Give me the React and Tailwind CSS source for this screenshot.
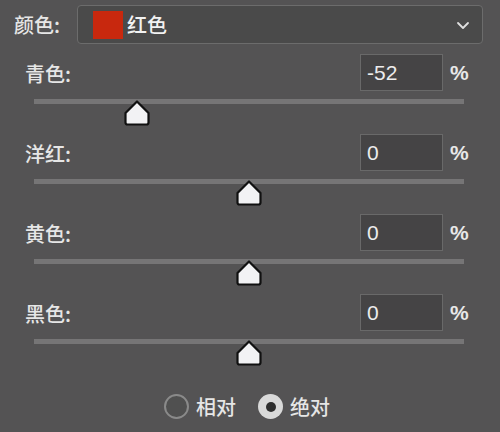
import { useState } from 'react';

const channels = [
  { name: '青色', value: -52 },
  { name: '洋红', value: 0 },
  { name: '黄色', value: 0 },
  { name: '黑色', value: 0 },
];

function Thumb() {
  return (
    <svg width="27" height="26" viewBox="0 0 27 26">
      <path
        d="M13.5 1.5 L25 13 L25 22.5 Q25 24.5 23 24.5 L4 24.5 Q2 24.5 2 22.5 L2 13 Z"
        fill="#f2f2f4"
        stroke="#111"
        strokeWidth="2.2"
        strokeLinejoin="round"
      />
    </svg>
  );
}

function ChannelRow({ name, value }) {
  // slider goes from -100 to 100
  const pct = (value + 100) / 2;
  return (
    <div className="h-[80px]">
      <div className="flex items-center h-[37px]">
        <span className="pl-[25px] text-[20px] font-medium text-[#e6e6e6] leading-none pt-[3px]">{name}:</span>
        <div className="ml-auto w-[83px] h-[37px] border border-[#696969] bg-[#454445] flex items-center pl-[6px]">
          <span className="text-[21px] text-[#ececec] font-['Liberation_Sans',sans-serif] leading-none">{value}</span>
        </div>
        <span className="w-[57px] pl-[7px] text-[21px] font-bold text-[#e8e8e8] font-['Liberation_Sans',sans-serif] leading-none">%</span>
      </div>
      <div className="relative ml-[34px] w-[430px] h-[5px] mt-[8px] bg-[#767576]">
        <div
          className="absolute top-[1px] -translate-x-1/2"
          style={{ left: `${pct}%` }}
        >
          <Thumb />
        </div>
      </div>
    </div>
  );
}

export default function App() {
  const [mode, setMode] = useState('absolute');

  return (
    <div className="w-[500px] h-[432px] bg-[#545354] pt-[5px] font-['Noto_Sans_CJK_SC',sans-serif] select-none">
      {/* Color selector */}
      <div className="flex items-center h-[39px]">
        <span className="ml-[14px] w-[63px] text-[20px] font-medium text-[#e6e6e6] leading-none">颜色:</span>
        <div className="w-[406px] h-[39px] rounded-[4px] border border-[#6c6c6c] bg-[#4a4a4a] flex items-center pl-[15px] pr-[12px]">
          <span className="w-[30px] h-[28px] bg-[#c8280e]" />
          <span className="ml-[4px] text-[20px] font-medium text-[#f2f2f2] leading-none">红色</span>
          <svg className="ml-auto" width="14" height="10" viewBox="0 0 14 10">
            <path d="M2 3 L7 8 L12 3" fill="none" stroke="#e0e0e0" strokeWidth="1.8" strokeLinecap="round" strokeLinejoin="round" />
          </svg>
        </div>
      </div>

      {/* Channels */}
      <div className="mt-[10px]">
        {channels.map((c) => (
          <ChannelRow key={c.name} name={c.name} value={c.value} />
        ))}
      </div>

      {/* Method */}
      <div className="mt-[20px] flex items-center justify-center gap-[8px] pr-[6px]">
        <button className="flex items-center gap-[7px]" onClick={() => setMode('relative')}>
          <span className="w-[25px] h-[25px] rounded-full border-2 border-[#8a8a8a] bg-[#505050] flex items-center justify-center">
            {mode === 'relative' && <span className="w-[9px] h-[9px] rounded-full bg-[#333]" />}
          </span>
          <span className="text-[20px] font-medium text-[#e6e6e6] leading-none">相对</span>
        </button>
        <button className="flex items-center gap-[7px] ml-[14px]" onClick={() => setMode('absolute')}>
          <span className={`w-[25px] h-[25px] rounded-full flex items-center justify-center ${mode === 'absolute' ? 'bg-[#d9d9d9]' : 'border-2 border-[#8a8a8a] bg-[#505050]'}`}>
            {mode === 'absolute' && <span className="w-[10px] h-[10px] rounded-full bg-[#2e2e2e]" />}
          </span>
          <span className="text-[20px] font-medium text-[#e6e6e6] leading-none">绝对</span>
        </button>
      </div>
    </div>
  );
}
